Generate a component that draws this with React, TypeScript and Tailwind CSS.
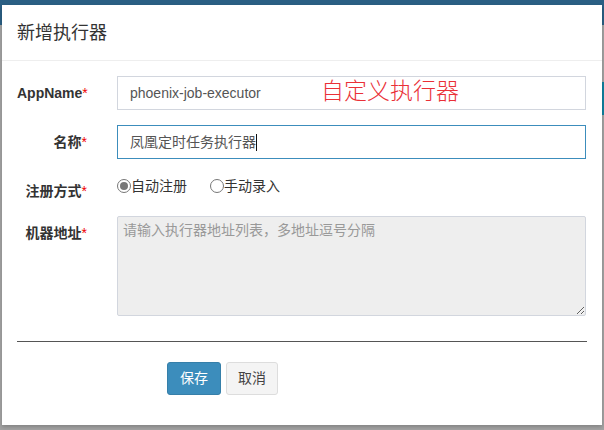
export default function App() {
  const font = { fontFamily: '"Liberation Sans", "Noto Sans CJK SC", sans-serif' };

  return (
    <div className="relative w-[604px] h-[430px] overflow-hidden bg-[#a3a3a3]" style={font}>
      {/* page behind the backdrop */}
      <div className="h-[25px] bg-[#2a5f84]" />
      <div className="absolute right-0 top-[82px] w-[16px] h-[33px] bg-[#10819f]" />

      {/* modal */}
      <div className="absolute left-[2px] top-[5px] w-[600px] h-[420px] bg-white shadow-[0_2px_4px_rgba(0,0,0,0.2)] flex flex-col">
        <div className="h-[56px] border-b border-[#eeeeee] px-[15px] flex items-center">
          <h4 className="text-[18px] text-[#333] leading-[26px]">新增执行器</h4>
        </div>

        <div className="px-[15px] pt-[15px] flex flex-col text-[14px] text-[#333]">
          {/* AppName */}
          <div className="flex gap-[30px] h-[34px]">
            <label className="w-[70px] text-right font-bold pt-[7px] leading-[20px]">
              AppName<span className="text-[#e00] font-normal">*</span>
            </label>
            <div className="relative w-[469px]">
              <input
                readOnly
                value="phoenix-job-executor"
                className="w-full h-[34px] border border-[#d2d6de] px-[12px] text-[14px] text-[#555] outline-none"
                style={font}
              />
              <span className="absolute left-[204px] top-[4px] text-[23px] leading-none font-light text-[#ea3037]">
                自定义执行器
              </span>
            </div>
          </div>

          {/* 名称 */}
          <div className="flex gap-[30px] h-[34px] mt-[15px]">
            <label className="w-[70px] text-right font-bold pt-[7px] leading-[20px]">
              名称<span className="text-[#e00] font-normal">*</span>
            </label>
            <div className="w-[469px] h-[34px] border border-[#3c8dbc] px-[12px] flex items-center text-[#555]">
              <span>凤凰定时任务执行器</span>
              <span className="w-px h-[17px] bg-[#111]" />
            </div>
          </div>

          {/* 注册方式 */}
          <div className="flex gap-[30px] h-[27px] mt-[15px]">
            <label className="w-[70px] text-right font-bold pt-[7px] leading-[20px] whitespace-nowrap">
              注册方式<span className="text-[#e00] font-normal">*</span>
            </label>
            <div className="flex items-center h-[22px] pt-[1px] leading-[20px]">
              <span className="w-[14px] h-[14px] rounded-full border border-[#777] flex items-center justify-center">
                <span className="w-[8px] h-[8px] rounded-full bg-[#777]" />
              </span>
              <span>自动注册</span>
              <span className="ml-[23px] w-[14px] h-[14px] rounded-full border border-[#777]" />
              <span>手动录入</span>
            </div>
          </div>

          {/* 机器地址 */}
          <div className="flex gap-[30px] mt-[15px]">
            <label className="w-[70px] text-right font-bold pt-[7px] leading-[20px] whitespace-nowrap">
              机器地址<span className="text-[#e00] font-normal">*</span>
            </label>
            <textarea
              readOnly
              placeholder="请输入执行器地址列表，多地址逗号分隔"
              className="w-[469px] h-[100px] bg-[#eeeeee] border border-[#d2d6de] rounded-[2px] px-[5px] py-[3px] text-[14px] leading-[20px] text-[#555] placeholder:text-[#999] outline-none"
              style={font}
            />
          </div>

          <hr className="mt-[25px] border-0 border-t border-[#555] w-[570px]" />

          <div className="flex gap-[5px] mt-[20px] ml-[150px]">
            <button className="w-[54px] h-[33px] rounded-[3px] bg-[#3c8dbc] border border-[#367fa9] text-white text-[14px]">
              保存
            </button>
            <button className="w-[52px] h-[33px] rounded-[3px] bg-[#f4f4f4] border border-[#dddddd] text-[#444] text-[14px]">
              取消
            </button>
          </div>
        </div>
      </div>
    </div>
  );
}
